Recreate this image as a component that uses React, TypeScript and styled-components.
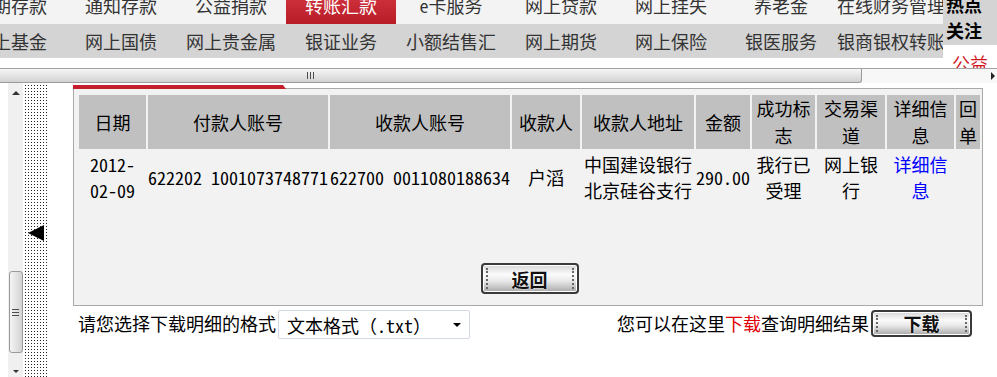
import styled, { createGlobalStyle } from "styled-components";

const FONT = `"Noto Sans Mono CJK SC", "Noto Sans CJK SC", "DejaVu Sans", sans-serif`;

const GlobalStyle = createGlobalStyle`
  html, body {
    margin: 0;
    padding: 0;
    background: #fff;
  }
  body {
    width: 997px;
    height: 377px;
    overflow: hidden;
    font-family: ${FONT};
    font-size: 18px;
    color: #000;
  }
`;

const navTop = ["定期存款", "通知存款", "公益捐款", "转账汇款", "e卡服务", "网上贷款", "网上挂失", "养老金", "在线财务管理"];
const navSub = ["网上基金", "网上国债", "网上贵金属", "银证业务", "小额结售汇", "网上期货", "网上保险", "银医服务", "银商银权转账"];

const heads = [
  { t: "日期", w: 67 },
  { t: "付款人账号", w: 180 },
  { t: "收款人账号", w: 180 },
  { t: "收款人", w: 68 },
  { t: "收款人地址", w: 112 },
  { t: "金额", w: 54 },
  { t: "成功标志", w: 63 },
  { t: "交易渠道", w: 68 },
  { t: "详细信息", w: 67 },
  { t: "回单", w: 24 },
];

export default function App() {
  return (
    <>
      <GlobalStyle />
      <Header>
        <NavArea>
          <NavBar $tone="light" $h={24}>
            <NavTrack $line={10}>
              {navTop.map((n) => (
                <NavItem key={n} $active={n === "转账汇款"}>{n}</NavItem>
              ))}
            </NavTrack>
          </NavBar>
          <NavBar $tone="gray" $h={34}>
            <NavTrack $line={34}>
              {navSub.map((n) => (
                <NavItem key={n}>{n}</NavItem>
              ))}
            </NavTrack>
          </NavBar>
        </NavArea>
        <Side>
          <HotBox>
            <HotText>热点<br />关注</HotText>
          </HotBox>
          <SideLink>公益</SideLink>
        </Side>
      </Header>

      <HScroll>
        <HThumb>
          <Grip />
        </HThumb>
        <HTrack>
          <ArrowRight />
        </HTrack>
      </HScroll>

      <Body>
        <Gutter />
        <VScroll>
          <ArrowUp />
          <VThumb>
            <VGrip />
          </VThumb>
          <ArrowDown />
        </VScroll>
        <DotColumn>
          <Collapse />
        </DotColumn>

        <Main>
          <TabLine />
          <Panel>
            <Table>
              <colgroup>
                {heads.map((h) => (
                  <col key={h.t} style={{ width: h.w }} />
                ))}
              </colgroup>
              <thead>
                <tr>
                  {heads.map((h) => (
                    <Th key={h.t}>{h.t}</Th>
                  ))}
                </tr>
              </thead>
              <tbody>
                <tr>
                  <Td>2012-02-09</Td>
                  <Td $nowrap>622202 1001073748771</Td>
                  <Td $nowrap>622700 0011080188634</Td>
                  <Td>户滔</Td>
                  <Td>中国建设银行北京硅谷支行</Td>
                  <Td>290.00</Td>
                  <Td>我行已受理</Td>
                  <Td>网上银行</Td>
                  <Td><Link href="#">详细信息</Link></Td>
                  <Td></Td>
                </tr>
              </tbody>
            </Table>
            <ButtonRow>
              <Btn $w={98} $h={31}>返回</Btn>
            </ButtonRow>
          </Panel>

          <BottomBar>
            <Group>
              <span>请您选择下载明细的格式</span>
              <SelectWrap>
                <Select defaultValue="txt">
                  <option value="txt">文本格式（.txt）</option>
                  <option value="xls">表格格式（.xls）</option>
                </Select>
              </SelectWrap>
            </Group>
            <Group>
              <span>您可以在这里<Red>下载</Red>查询明细结果</span>
              <Btn $w={101} $h={27}>下载</Btn>
            </Group>
          </BottomBar>
        </Main>
      </Body>
    </>
  );
}

const Header = styled.div`
  display: grid;
  grid-template-columns: 943px 54px;
  height: 68px;
  overflow: hidden;
`;

const NavArea = styled.div`
  overflow: hidden;
`;

const NavBar = styled.div<{ $tone: "light" | "gray"; $h: number }>`
  height: ${(p) => p.$h}px;
  background: ${(p) => (p.$tone === "light" ? "#f3f3f3" : "#d4d4d4")};
  overflow: hidden;
`;

const NavTrack = styled.ul<{ $line: number }>`
  display: grid;
  grid-template-columns: repeat(9, 110px);
  height: 100%;
  margin: 0 0 0 -44px;
  padding: 0;
  list-style: none;
  line-height: ${(p) => p.$line}px;
`;

const NavItem = styled.li<{ $active?: boolean }>`
  text-align: center;
  white-space: nowrap;
  color: ${(p) => (p.$active ? "#fff" : "#333")};
  background: ${(p) => (p.$active ? "linear-gradient(#cc2f3a, #b81c27)" : "transparent")};
`;

const Side = styled.div`
  display: flex;
  flex-direction: column;
  overflow: hidden;
`;

const HotBox = styled.div`
  height: 45px;
  flex: none;
  overflow: hidden;
  background: #d4d4d4;
  font-weight: bold;
  line-height: 26px;
  padding-left: 3px;
`;

const HotText = styled.div`
  margin-top: -9px;
`;

const SideLink = styled.div`
  padding: 5px 0 0 9px;
  line-height: 26px;
  color: #d0141c;
`;

const HScroll = styled.div`
  display: flex;
  height: 15px;
  box-sizing: border-box;
  border-top: 1px solid #a3a3a3;
  background: #f7f7f7;
  overflow: hidden;
`;

const HThumb = styled.div`
  flex: none;
  width: 1104px;
  margin-left: -242px;
  box-sizing: border-box;
  border: 1px solid #9c9c9c;
  border-top: none;
  border-radius: 0 0 3px 0;
  background: linear-gradient(#f6f6f6, #e4e4e4 50%, #d2d2d2);
  display: flex;
  align-items: center;
  justify-content: center;
`;

const Grip = styled.div`
  width: 7px;
  height: 7px;
  background: repeating-linear-gradient(90deg, #4d4d4d 0 1px, transparent 1px 3px);
`;

const HTrack = styled.div`
  flex: 1;
  display: flex;
  align-items: center;
  justify-content: flex-end;
  padding-right: 2px;
`;

const ArrowRight = styled.div`
  width: 0;
  height: 0;
  border-top: 4px solid transparent;
  border-bottom: 4px solid transparent;
  border-left: 4px solid #222;
`;

const Body = styled.div`
  display: flex;
  height: 295px;
`;

const Gutter = styled.div`
  width: 8px;
  flex: none;
`;

const VScroll = styled.div`
  width: 15px;
  flex: none;
  display: flex;
  flex-direction: column;
  align-items: center;
  background: #f0f0f0;
`;

const ArrowUp = styled.div`
  margin-top: 8px;
  width: 0;
  height: 0;
  border-left: 4px solid transparent;
  border-right: 4px solid transparent;
  border-bottom: 4px solid #333;
`;

const ArrowDown = styled.div`
  margin-top: auto;
  margin-bottom: 5px;
  width: 0;
  height: 0;
  border-left: 3px solid transparent;
  border-right: 3px solid transparent;
  border-top: 3px solid #333;
`;

const VThumb = styled.div`
  margin-top: 176px;
  width: 14px;
  height: 82px;
  box-sizing: border-box;
  border: 1px solid #9a9a9a;
  border-radius: 3px;
  background: linear-gradient(90deg, #f4f4f4, #e2e2e2 55%, #d2d2d2);
  display: flex;
  align-items: center;
  justify-content: center;
`;

const VGrip = styled.div`
  width: 7px;
  height: 7px;
  background: repeating-linear-gradient(180deg, #4d4d4d 0 1px, transparent 1px 3px);
`;

const DotColumn = styled.div`
  width: 25px;
  flex: none;
  margin-right: 25px;
  display: flex;
  align-items: center;
  justify-content: center;
  background-color: #fff;
  background-image: linear-gradient(90deg, #fff 2px, transparent 2px),
    linear-gradient(180deg, #fff 2px, #222 2px);
  background-size: 3px 3px;
`;

const Collapse = styled.div`
  margin-top: 5px;
  width: 0;
  height: 0;
  border-top: 8px solid transparent;
  border-bottom: 8px solid transparent;
  border-right: 16px solid #000;
`;

const Main = styled.div`
  width: 910px;
  flex: none;
  display: flex;
  flex-direction: column;
`;

const TabLine = styled.div`
  position: relative;
  z-index: 1;
  margin-top: 2px;
  width: 213px;
  height: 4px;
  background: #c3202c;
  clip-path: polygon(0 0, calc(100% - 3px) 0, 100% 100%, 0 100%);
`;

const Panel = styled.div`
  margin-top: -1px;
  border: 1px solid #a9a9a9;
  background: #f2f2f2;
  padding: 4px 0 11px 3px;
`;

const Table = styled.table`
  table-layout: fixed;
  width: 905px;
  border-spacing: 2px;
  border-collapse: separate;
`;

const Th = styled.th`
  height: 54px;
  padding: 0;
  background: #c0c0c0;
  font-weight: normal;
  line-height: 27px;
  text-align: center;
  vertical-align: middle;
`;

const Td = styled.td<{ $nowrap?: boolean }>`
  height: 52px;
  padding: 0;
  line-height: 26px;
  text-align: center;
  vertical-align: middle;
  white-space: ${(p) => (p.$nowrap ? "nowrap" : "normal")};
  overflow: hidden;
`;

const Link = styled.a`
  color: #0000ff;
  text-decoration: none;
`;

const ButtonRow = styled.div`
  display: flex;
  justify-content: center;
  margin-top: 58px;
`;

const Btn = styled.button<{ $w: number; $h: number }>`
  position: relative;
  width: ${(p) => p.$w}px;
  height: ${(p) => p.$h}px;
  padding: 0;
  border: 2px solid #3a3a3a;
  border-radius: 4px;
  box-shadow: inset 0 0 0 1px #fff;
  background: linear-gradient(#d6d6d6 0%, #fbfbfb 35%, #e8e8e8 60%, #a8a8a8 100%);
  font-family: ${FONT};
  font-size: 18px;
  font-weight: bold;
  line-height: 1;
  color: #111;
  text-shadow: 0 0 2px #fff;
  cursor: pointer;

  &::before,
  &::after {
    content: "";
    position: absolute;
    top: 3px;
    bottom: 3px;
    border-left: 2px dotted #666;
  }
  &::before {
    left: 3px;
  }
  &::after {
    right: 3px;
  }
`;

const BottomBar = styled.div`
  display: flex;
  align-items: center;
  justify-content: space-between;
  height: 34px;
  padding: 0 11px 0 5px;
`;

const Group = styled.div`
  display: flex;
  align-items: center;
  gap: 2px;
  white-space: nowrap;
`;

const Red = styled.span`
  color: #e00000;
`;

const SelectWrap = styled.div`
  position: relative;
  width: 192px;
  height: 29px;
  margin-top: 3px;

  &::after {
    content: "";
    position: absolute;
    right: 9px;
    top: 13px;
    border-left: 4px solid transparent;
    border-right: 4px solid transparent;
    border-top: 4px solid #000;
    pointer-events: none;
  }
`;

const Select = styled.select`
  appearance: none;
  width: 100%;
  height: 100%;
  box-sizing: border-box;
  padding: 0 0 0 8px;
  border: 1px solid #d3d9e4;
  border-radius: 2px;
  background: #fff;
  font-family: ${FONT};
  font-size: 18px;
  color: #000;
`;
